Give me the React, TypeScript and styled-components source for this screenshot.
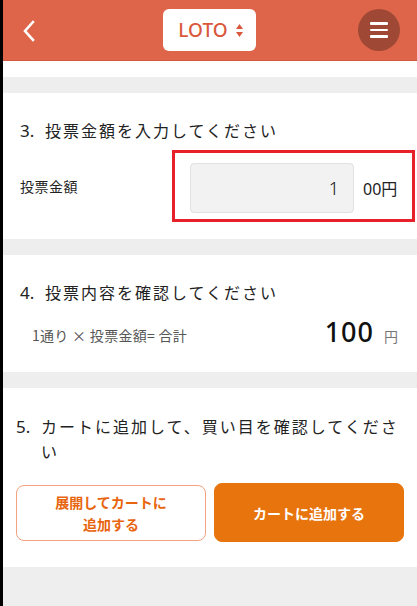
import React from "react";
import styled, { createGlobalStyle } from "styled-components";

const Global = createGlobalStyle`
  html, body { margin: 0; padding: 0; background: #000; }
  body { font-family: "Noto Sans CJK JP", "Noto Sans", sans-serif; }
  * { box-sizing: border-box; }
`;

const Page = styled.div`
  margin-left: 3px;
  min-height: 606px;
  background: #eeeeee;
  display: flex;
  flex-direction: column;
`;

const Header = styled.header`
  height: 61px;
  background: #de654a;
  border-bottom: 1px solid #cf5a40;
  display: flex;
  align-items: center;
  justify-content: space-between;
  padding: 0 17px 0 16px;
`;

const BackButton = styled.button`
  width: 20px;
  height: 24px;
  border: none;
  background: transparent;
  padding: 0;
  display: flex;
  align-items: center;
  justify-content: center;
  margin-top: 2px;
`;

const GameSelect = styled.button`
  width: 93px;
  height: 42px;
  margin-left: 22px;
  background: #fff;
  border: none;
  border-radius: 6px;
  display: flex;
  align-items: center;
  justify-content: center;
  gap: 8px;
  color: #d9583c;
  font-family: "Noto Sans", sans-serif;
  font-size: 19px;
  font-weight: 500;
  padding: 0 0 0 2px;
`;

const MenuButton = styled.button`
  width: 42px;
  height: 42px;
  border-radius: 50%;
  background: #9f4836;
  border: none;
  display: flex;
  flex-direction: column;
  align-items: center;
  justify-content: center;
  gap: 4px;
  padding: 0;
`;

const MenuLine = styled.span`
  width: 18px;
  height: 2.5px;
  background: #fff;
  border-radius: 1px;
`;

const Spacer = styled.div`
  height: 16px;
  background: #fff;
`;

const Section = styled.section<{ $pt: number; $pb: number; $px: number }>`
  background: #fff;
  margin-top: 16px;
  padding: ${(p) => p.$pt}px ${(p) => p.$px}px ${(p) => p.$pb}px;
`;

const Title = styled.h2`
  margin: 0;
  display: flex;
  font-size: 16px;
  font-weight: 400;
  line-height: 25px;
  color: #222;
  letter-spacing: 2px;
`;

const TitleNum = styled.span`
  flex: none;
  width: 25px;
  font-family: "Noto Sans", sans-serif;
  font-size: 17px;
  letter-spacing: 0;
`;

const InputRow = styled.div`
  display: flex;
  align-items: center;
  justify-content: space-between;
  margin-top: 7px;
`;

const Label = styled.span`
  font-size: 14px;
  color: #222;
  letter-spacing: 0.5px;
`;

const Highlight = styled.div`
  width: 243px;
  margin-right: -15px;
  border: 3px solid #e8202a;
  padding: 10px 13px 6px 15px;
  display: flex;
  align-items: center;
  gap: 9px;
`;

const AmountInput = styled.div`
  width: 164px;
  height: 50px;
  background: #f2f2f2;
  border: 1px solid #e1e1e1;
  border-radius: 4px;
  display: flex;
  align-items: center;
  justify-content: flex-end;
  padding-right: 14px;
  font-family: "Noto Sans", sans-serif;
  font-size: 18px;
  font-weight: 300;
  color: #111;
`;

const Unit = styled.span`
  font-family: "Noto Sans", "Noto Sans CJK JP", sans-serif;
  font-size: 16px;
  font-weight: 400;
  color: #222;
`;

const SummaryRow = styled.div`
  display: flex;
  align-items: center;
  justify-content: space-between;
  padding: 8px 2px 0 12px;
`;

const Formula = styled.span`
  font-size: 14px;
  color: #555;
  margin-top: 6px;
  letter-spacing: 0.3px;
`;

const Total = styled.div`
  display: flex;
  align-items: baseline;
  gap: 10px;
`;

const TotalValue = styled.span`
  font-family: "Noto Sans", sans-serif;
  font-size: 27px;
  font-weight: 500;
  color: #111;
  letter-spacing: 1px;
`;

const TotalUnit = styled.span`
  font-size: 14px;
  color: #777;
`;

const Buttons = styled.div`
  display: grid;
  grid-template-columns: 190px 190px;
  justify-content: space-between;
  align-items: center;
  margin-top: 19px;
`;

const ActionButton = styled.button<{ $primary?: boolean }>`
  height: ${(p) => (p.$primary ? 59 : 56)}px;
  border-radius: 8px;
  border: 1px solid ${(p) => (p.$primary ? "#e8740e" : "#f2a27c")};
  background: ${(p) => (p.$primary ? "#e8740e" : "#fff")};
  color: ${(p) => (p.$primary ? "#fff" : "#e8650f")};
  font-family: "Noto Sans CJK JP", sans-serif;
  font-size: 14px;
  font-weight: 700;
  line-height: 22px;
  padding: 0;
`;

export default function App() {
  return (
    <>
      <Global />
      <Page>
        <Header>
          <BackButton aria-label="戻る">
            <svg width="14" height="22" viewBox="0 0 14 22">
              <polyline points="11,2 3,11 11,20" fill="none" stroke="#fff" strokeWidth="2.6" strokeLinecap="square" />
            </svg>
          </BackButton>
          <GameSelect>
            LOTO
            <svg width="7" height="13" viewBox="0 0 7 13">
              <polygon points="3.5,0 7,5 0,5" fill="#d9583c" />
              <polygon points="0,8 7,8 3.5,13" fill="#d9583c" />
            </svg>
          </GameSelect>
          <MenuButton aria-label="メニュー">
            <MenuLine />
            <MenuLine />
            <MenuLine />
          </MenuButton>
        </Header>
        <Spacer />

        <Section $pt={25} $pb={17} $px={17}>
          <Title>
            <TitleNum>3.</TitleNum>投票金額を入力してください
          </Title>
          <InputRow>
            <Label>投票金額</Label>
            <Highlight>
              <AmountInput>1</AmountInput>
              <Unit>00円</Unit>
            </Highlight>
          </InputRow>
        </Section>

        <Section $pt={25} $pb={22} $px={17}>
          <Title>
            <TitleNum>4.</TitleNum>投票内容を確認してください
          </Title>
          <SummaryRow>
            <Formula>1通り × 投票金額= 合計</Formula>
            <Total>
              <TotalValue>100</TotalValue>
              <TotalUnit>円</TotalUnit>
            </Total>
          </SummaryRow>
        </Section>

        <Section $pt={26} $pb={25} $px={13}>
          <Title>
            <TitleNum>5.</TitleNum>カートに追加して、買い目を確認してください
          </Title>
          <Buttons>
            <ActionButton>
              展開してカートに
              <br />
              追加する
            </ActionButton>
            <ActionButton $primary>カートに追加する</ActionButton>
          </Buttons>
        </Section>
      </Page>
    </>
  );
}
